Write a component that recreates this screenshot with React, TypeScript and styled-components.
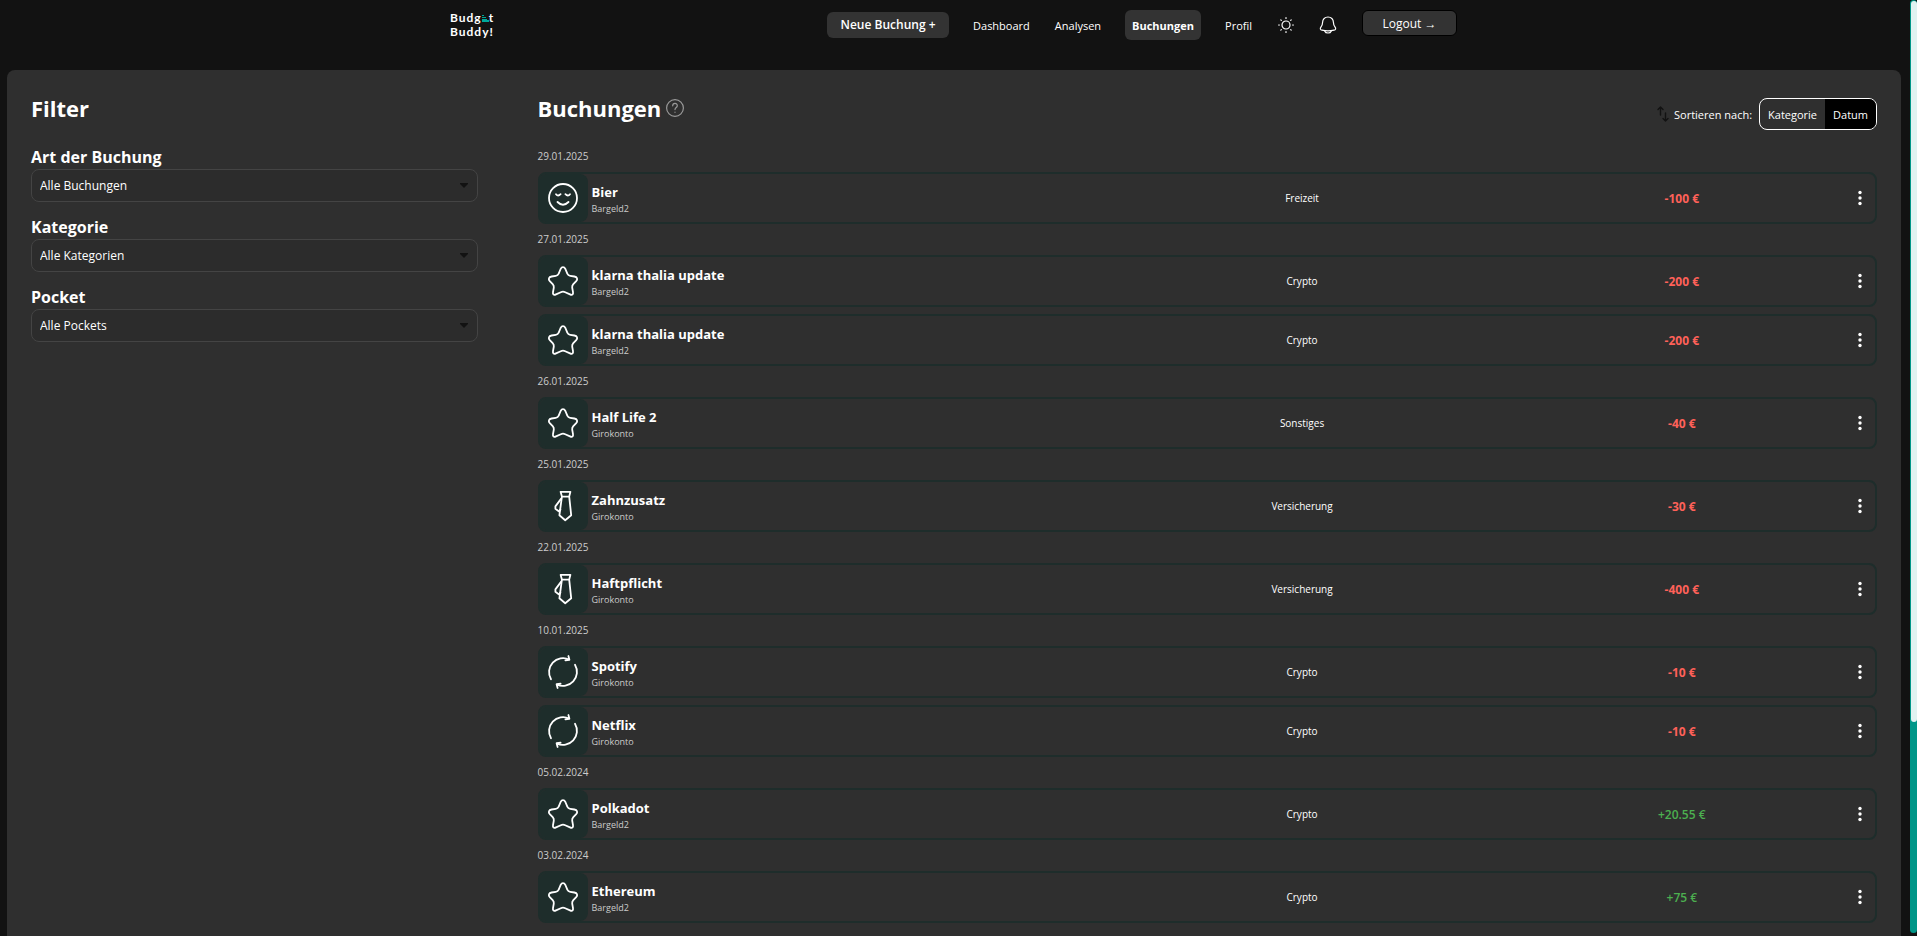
import React from "react";
import styled, { createGlobalStyle, css } from "styled-components";

const GlobalStyle = createGlobalStyle`
  *, *::before, *::after { box-sizing: border-box; }
  body {
    margin: 0;
    background: #121212;
    color: #fff;
    font-family: "Segoe UI", "Open Sans", "Noto Sans", sans-serif;
    font-size: 12px;
    line-height: 16px;
  }
  button, select { font: inherit; color: inherit; }
`;

const Page = styled.div`
  display: flex;
  height: 100vh;
  overflow: hidden;
`;

const Content = styled.div`
  flex: 1;
  min-width: 0;
  display: flex;
  flex-direction: column;
`;

const ScrollTrack = styled.div`
  width: 7px;
  height: calc(100vh - 3px);
  padding: 1px 0 0 1px;
  background: #009688;
  border-radius: 4px;
`;

const ScrollThumb = styled.div`
  height: 77.4%;
  background: #e0f2f1;
  border-radius: 3px;
`;

const Header = styled.header`
  display: flex;
  justify-content: space-between;
  align-items: flex-start;
  flex: none;
  height: 70px;
  padding: 10px 453px 0 450px;
`;

const Logo = styled.a`
  display: block;
  margin-top: 1px;
  color: #fff;
  font-family: Lato, sans-serif;
  font-size: 12px;
  font-weight: 700;
  line-height: 14px;
  letter-spacing: 1px;
  text-decoration: none;
`;

const Nav = styled.nav`
  display: flex;
  align-items: flex-start;
`;

const NewBooking = styled.button`
  height: 26px;
  width: 122px;
  margin: 2px 18px 0 0;
  padding: 0;
  border: 0;
  border-radius: 6px;
  background: #333;
  font-weight: 600;
`;

const NavLinks = styled.div`
  display: flex;
  gap: 13px;
  margin-right: 7px;
`;

const NavLink = styled.a<{ $active?: boolean }>`
  height: 30px;
  padding: 0 6px;
  border-radius: 6px;
  color: #fff;
  font-size: 11px;
  line-height: 31px;
  text-decoration: none;
  ${(p) => p.$active && css`
    margin: 0 5px;
    padding: 0 7px;
    background: #333;
    font-weight: 700;
  `}
`;

const IconButton = styled.button`
  display: flex;
  align-items: center;
  justify-content: center;
  width: 42px;
  height: 30px;
  padding: 0;
  border: 0;
  background: none;
`;

const Logout = styled.button`
  width: 95px;
  height: 26px;
  margin-left: 13px;
  padding: 1px 0 0;
  border: 1px solid #000;
  border-radius: 6px;
  background: #333;
`;

const Panel = styled.main`
  flex: 1;
  min-height: 0;
  display: grid;
  grid-template-columns: 1fr 3fr;
  column-gap: 60px;
  margin: 0 9px 0 7px;
  padding: 24px;
  border-radius: 8px 8px 0 0;
  background: #2f2f2f;
  overflow: hidden;
`;

const Title = styled.h1`
  margin: 0;
  font-size: 22px;
  line-height: 28px;
  font-weight: 700;
`;

const FilterForm = styled.form`
  display: flex;
  flex-direction: column;
  gap: 13px;
  margin-top: 23px;
`;

const FilterField = styled.div`
  display: flex;
  flex-direction: column;
`;

const FilterLabel = styled.label`
  font-size: 16px;
  line-height: 24px;
  font-weight: 700;
`;

const SelectWrap = styled.div`
  position: relative;
  svg {
    position: absolute;
    right: 10px;
    top: 14px;
    pointer-events: none;
  }
`;

const Select = styled.select`
  display: block;
  width: 100%;
  height: 33px;
  padding: 0 8px;
  border: 1px solid #444;
  border-radius: 8px;
  background: #2c2c2c;
  appearance: none;
`;

const ListHeader = styled.div`
  display: flex;
  justify-content: space-between;
  height: 54px;
`;

const TitleRow = styled.div`
  display: flex;
  align-items: flex-start;
  gap: 5px;
`;

const HelpButton = styled.button`
  display: flex;
  padding: 5px 0 0;
  border: 0;
  background: none;
`;

const SortRow = styled.div`
  display: flex;
  align-items: center;
  align-self: flex-start;
  height: 32px;
  margin-top: 4px;
  font-size: 11px;
`;

const SortLabel = styled.span`
  margin: 0 7px 0 5px;
  padding-top: 1px;
`;

const Toggle = styled.div`
  display: flex;
  height: 32px;
  border: 1px solid #fff;
  border-radius: 8px;
  overflow: hidden;
`;

const ToggleButton = styled.button<{ $active?: boolean }>`
  padding: 1px 8px 0;
  border: 0;
  background: ${(p) => (p.$active ? "#000" : "transparent")};
`;

const DateLine = styled.h2`
  margin: 0 0 8px;
  color: #ccc;
  font-size: 10px;
  line-height: 16px;
  font-weight: 400;
`;

const Entries = styled.ul`
  margin: 0;
  padding: 0;
  list-style: none;
`;

const Entry = styled.li`
  display: grid;
  grid-template-columns: 5fr 4fr 3fr 30px;
  align-items: center;
  height: 52px;
  margin-bottom: 7px;
  border: 2px solid #1e2d2b;
  border-radius: 8px;
`;

const EntryMain = styled.div`
  display: flex;
  align-items: center;
  gap: 4px;
`;

const Tile = styled.div`
  display: flex;
  align-items: center;
  justify-content: center;
  width: 48px;
  height: 48px;
  padding-right: 2px;
  border-radius: 6px 8px 8px 6px;
  background: #1e2d2b;
`;

const EntryText = styled.div`
  padding-top: 3px;
`;

const EntryName = styled.div`
  font-size: 13px;
  line-height: 19px;
  font-weight: 700;
`;

const Account = styled.div`
  color: #ccc;
  font-size: 9px;
  line-height: 14px;
`;

const Category = styled.div`
  padding-left: 2px;
  font-size: 10px;
  text-align: center;
`;

const Amount = styled.div<{ $positive: boolean }>`
  padding-top: 1px;
  color: ${(p) => (p.$positive ? "#4caf50" : "#ff6159")};
  font-weight: ${(p) => (p.$positive ? 600 : 700)};
  text-align: center;
`;

const MenuButton = styled.button`
  display: flex;
  justify-content: center;
  padding: 0;
  border: 0;
  background: none;
`;

type IconName = "face" | "star" | "tie" | "cycle";

const shapes: Record<IconName, React.ReactNode> = {
  face: (
    <>
      <circle cx="15" cy="15" r="14" />
      <path d="M8 11.2q2 2.6 4.6 0M17.4 11.2q2.6 2.6 4.6 0M9.5 19q5.5 5.5 11 0" />
    </>
  ),
  star: (
    <path d="M12.6 3C13.9.6 16.1.6 17.4 3L19.4 7.8C19.9 9.1 20.8 9.7 22.2 9.9L26.4 10.5C29.2 11 30 13.2 28.2 15.2L25.3 18.2C24.4 19.2 24 20.3 24.2 21.6L25 26.2C25.4 28.6 24.2 29.4 22 28.4L17.2 26.2C15.7 25.5 14.3 25.5 12.8 26.2L8 28.4C5.8 29.4 4.6 28.6 5 26.2L5.8 21.6C6 20.3 5.6 19.2 4.7 18.2L1.8 15.2C0 13.2.8 11 3.6 10.5L7.8 9.9C9.2 9.7 10.1 9.1 10.6 7.8Z" />
  ),
  tie: (
    <>
      <path d="M12.6.8H22.4L21.2 5.6H13.9ZM13.9 5.6L11.4 24.3L17.2 29.2L23.2 24.3L21.2 5.6" />
      <path d="M13.2 7.6L7.4 15.4V17.8L11 20.4L12.4 18.6" />
    </>
  ),
  cycle: (
    <>
      <path d="M3 22.2A14 14 0 0 1 21.2 2.5M20.4-1L21.4 2.8L17.4 3.4" />
      <path d="M27 7.8A14 14 0 0 1 8.8 27.5M9.6 31L8.6 27.2L12.6 26.6" />
    </>
  ),
};

const EntryIcon = ({ name }: { name: IconName }) => (
  <svg width="30" height="30" viewBox="0 0 30 30" overflow="visible" fill="none" stroke="#fff" strokeWidth="1.8" strokeLinecap="round" strokeLinejoin="round" aria-hidden="true">
    {shapes[name]}
  </svg>
);

const filters = [
  { id: "art", label: "Art der Buchung", value: "Alle Buchungen" },
  { id: "kategorie", label: "Kategorie", value: "Alle Kategorien" },
  { id: "pocket", label: "Pocket", value: "Alle Pockets" },
];

type Booking = { name: string; account: string; category: string; amount: string; icon: IconName };

const groups: { date: string; items: Booking[] }[] = [
  { date: "29.01.2025", items: [{ name: "Bier", account: "Bargeld2", category: "Freizeit", amount: "-100 €", icon: "face" }] },
  {
    date: "27.01.2025",
    items: [
      { name: "klarna thalia update", account: "Bargeld2", category: "Crypto", amount: "-200 €", icon: "star" },
      { name: "klarna thalia update", account: "Bargeld2", category: "Crypto", amount: "-200 €", icon: "star" },
    ],
  },
  { date: "26.01.2025", items: [{ name: "Half Life 2", account: "Girokonto", category: "Sonstiges", amount: "-40 €", icon: "star" }] },
  { date: "25.01.2025", items: [{ name: "Zahnzusatz", account: "Girokonto", category: "Versicherung", amount: "-30 €", icon: "tie" }] },
  { date: "22.01.2025", items: [{ name: "Haftpflicht", account: "Girokonto", category: "Versicherung", amount: "-400 €", icon: "tie" }] },
  {
    date: "10.01.2025",
    items: [
      { name: "Spotify", account: "Girokonto", category: "Crypto", amount: "-10 €", icon: "cycle" },
      { name: "Netflix", account: "Girokonto", category: "Crypto", amount: "-10 €", icon: "cycle" },
    ],
  },
  { date: "05.02.2024", items: [{ name: "Polkadot", account: "Bargeld2", category: "Crypto", amount: "+20.55 €", icon: "star" }] },
  { date: "03.02.2024", items: [{ name: "Ethereum", account: "Bargeld2", category: "Crypto", amount: "+75 €", icon: "star" }] },
];

export default function App() {
  return (
    <Page>
      <GlobalStyle />
      <Content>
        <Header>
          <Logo href="#">
            Budg
            <svg width="7" height="7" viewBox="0 0 7 7" fill="#00a899" shapeRendering="crispEdges" aria-hidden="true">
              <path d="M0 0h2v1H0zM0 2h4v1H0zM0 4h5v1H0zM0 5h7v2H0z" />
            </svg>
            t<br />
            Buddy!
          </Logo>
          <Nav>
            <NewBooking type="button">Neue Buchung +</NewBooking>
            <NavLinks>
              <NavLink href="#">Dashboard</NavLink>
              <NavLink href="#">Analysen</NavLink>
              <NavLink href="#" $active>Buchungen</NavLink>
              <NavLink href="#">Profil</NavLink>
            </NavLinks>
            <IconButton type="button" aria-label="Design wechseln">
              <svg width="16" height="16" viewBox="0 0 16 16" fill="none" stroke="#fff" strokeWidth="1.2" strokeLinecap="round">
                <circle cx="8" cy="8" r="4" />
                <path d="M8 .6v.8M8 14.6v.8M.6 8h.8M14.6 8h.8M2.8 2.8l.5.5M12.7 12.7l.5.5M13.2 2.8l-.5.5M3.3 12.7l-.5.5" />
              </svg>
            </IconButton>
            <IconButton type="button" aria-label="Benachrichtigungen">
              <svg width="18" height="18" viewBox="0 0 18 18" fill="none" stroke="#fff" strokeWidth="1.2" strokeLinecap="round" strokeLinejoin="round">
                <path d="M9 1C5.8 1 3.6 3.3 3.6 6.3C3.6 8.8 3 9.7 1.9 11.2C.8 12.7 1.3 13.8 3 14.2C7 15.2 11 15.2 15 14.2C16.7 13.8 17.2 12.7 16.1 11.2C15 9.7 14.4 8.8 14.4 6.3C14.4 3.3 12.2 1 9 1Z" />
                <path d="M5.8 15.2C6.7 17.6 11.3 17.6 12.2 15.2" />
              </svg>
            </IconButton>
            <Logout type="button">Logout →</Logout>
          </Nav>
        </Header>
        <Panel>
          <section>
            <Title as="h2">Filter</Title>
            <FilterForm>
              {filters.map((f) => (
                <FilterField key={f.id}>
                  <FilterLabel htmlFor={f.id}>{f.label}</FilterLabel>
                  <SelectWrap>
                    <Select id={f.id}>
                      <option>{f.value}</option>
                    </Select>
                    <svg width="8" height="5" viewBox="0 0 8 5" fill="#121212" aria-hidden="true">
                      <path d="M0 0h8v1L4 5L0 1z" />
                    </svg>
                  </SelectWrap>
                </FilterField>
              ))}
            </FilterForm>
          </section>
          <section>
            <ListHeader>
              <TitleRow>
                <Title>Buchungen</Title>
                <HelpButton type="button" aria-label="Hilfe">
                  <svg width="18" height="18" viewBox="0 0 18 18" fill="none" stroke="#999" strokeWidth="1.2" strokeLinecap="round">
                    <circle cx="9" cy="9" r="8.4" />
                    <path d="M6.7 6.8C6.7 3.7 11.3 3.7 11.3 6.7C11.3 8.5 9 8.5 9 10.6M9 13.2v.1" />
                  </svg>
                </HelpButton>
              </TitleRow>
              <SortRow>
                <svg width="12" height="16" viewBox="0 0 12 16" fill="none" stroke="#121212" strokeWidth="1.4" strokeLinecap="round" strokeLinejoin="round" aria-hidden="true">
                  <path d="M3.5 9V1M1 3.5L3.5 1L6 3.5M8.5 7v8M6 12.5L8.5 15L11 12.5" />
                </svg>
                <SortLabel>Sortieren nach:</SortLabel>
                <Toggle role="group" aria-label="Sortieren nach">
                  <ToggleButton type="button">Kategorie</ToggleButton>
                  <ToggleButton type="button" $active>Datum</ToggleButton>
                </Toggle>
              </SortRow>
            </ListHeader>
            {groups.map((g) => (
              <div key={g.date}>
                <DateLine>{g.date}</DateLine>
                <Entries>
                  {g.items.map((b, i) => (
                    <Entry key={i}>
                      <EntryMain>
                        <Tile><EntryIcon name={b.icon} /></Tile>
                        <EntryText>
                          <EntryName>{b.name}</EntryName>
                          <Account>{b.account}</Account>
                        </EntryText>
                      </EntryMain>
                      <Category>{b.category}</Category>
                      <Amount $positive={b.amount.startsWith("+")}>{b.amount}</Amount>
                      <MenuButton type="button" aria-label="Optionen">
                        <svg width="4" height="16" viewBox="0 0 4 16" fill="#fff">
                          <circle cx="2" cy="2.5" r="1.7" />
                          <circle cx="2" cy="8" r="1.7" />
                          <circle cx="2" cy="13.5" r="1.7" />
                        </svg>
                      </MenuButton>
                    </Entry>
                  ))}
                </Entries>
              </div>
            ))}
          </section>
        </Panel>
      </Content>
      <ScrollTrack>
        <ScrollThumb />
      </ScrollTrack>
    </Page>
  );
}
